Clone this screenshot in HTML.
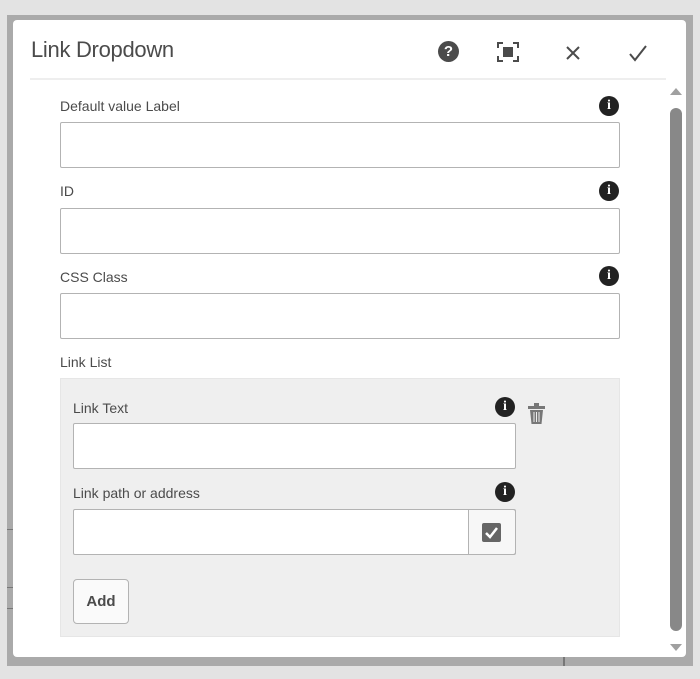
<!DOCTYPE html><html><head><style>
*{box-sizing:border-box;margin:0;padding:0}
body{width:700px;height:679px;background:#e3e3e3;position:relative;overflow:hidden;font-family:"Liberation Sans",sans-serif;color:#4b4b4b}
.frame{position:absolute;left:7px;top:15px;width:686px;height:651px;background:#aaa}
.dlg{position:absolute;left:13px;top:20px;width:673px;height:637px;background:#fff;border-radius:4px}
.a{position:absolute}
.lbl{position:absolute;font-size:14px;color:#4b4b4b}
.inp{position:absolute;background:#fff;border:1px solid #b3b3b3;border-radius:2px}
.info{position:absolute;width:20px;height:20px;border-radius:50%;background:#222;color:#fff;font:bold 14px/20px "Liberation Serif",serif;text-align:center}
</style></head><body>
<div class="frame"></div>
<div class="a" style="left:563px;top:657px;width:2px;height:9px;background:#777"></div>
<div class="a" style="left:7px;top:529px;width:6px;height:1px;background:#777"></div>
<div class="a" style="left:7px;top:587px;width:6px;height:1px;background:#777"></div>
<div class="a" style="left:7px;top:608px;width:6px;height:1px;background:#777"></div>
<div class="dlg"></div>
<div class="a" style="left:31px;top:37px;font-size:22px;font-weight:300;color:#4b4b4b;letter-spacing:-0.3px">Link Dropdown</div>
<div class="a" style="left:438px;top:41px;width:21px;height:21px;border-radius:50%;background:#4b4b4b;color:#fff;font:bold 15px/21px 'Liberation Sans';text-align:center">?</div>
<svg class="a" style="left:497px;top:42px" width="22" height="20" viewBox="0 0 22 20"><path d="M1 6V1h5M16 1h5v5M21 14v5h-5M6 19H1v-5" fill="none" stroke="#4b4b4b" stroke-width="2"/><rect x="6" y="5" width="10" height="10" fill="#4b4b4b"/></svg>
<svg class="a" style="left:565px;top:45px" width="16" height="16"><path d="M2 2l12 12M14 2L2 14" stroke="#4b4b4b" stroke-width="2"/></svg>
<svg class="a" style="left:628px;top:44px" width="20" height="18"><path d="M2 10l5 6L18 2" fill="none" stroke="#4b4b4b" stroke-width="2"/></svg>
<div class="a" style="left:30px;top:78px;width:636px;height:2px;background:#eee"></div>
<div class="a" style="left:670px;top:88px;width:0;height:0;border-left:6px solid transparent;border-right:6px solid transparent;border-bottom:7px solid #a0a0a0"></div>
<div class="a" style="left:670px;top:108px;width:12px;height:523px;background:#888;border-radius:6px"></div>
<div class="a" style="left:670px;top:644px;width:0;height:0;border-left:6px solid transparent;border-right:6px solid transparent;border-top:7px solid #a0a0a0"></div>

<div class="lbl" style="left:60px;top:98px">Default value Label</div><div class="info" style="left:599px;top:96px">i</div>
<div class="inp" style="left:60px;top:122px;width:560px;height:46px"></div>
<div class="lbl" style="left:60px;top:183px">ID</div><div class="info" style="left:599px;top:181px">i</div>
<div class="inp" style="left:60px;top:208px;width:560px;height:46px"></div>
<div class="lbl" style="left:60px;top:269px">CSS Class</div><div class="info" style="left:599px;top:266px">i</div>
<div class="inp" style="left:60px;top:293px;width:560px;height:46px"></div>
<div class="lbl" style="left:60px;top:354px">Link List</div>
<div class="a" style="left:60px;top:378px;width:560px;height:259px;background:#efefef;border:1px solid #e6e6e6"></div>
<div class="lbl" style="left:73px;top:400px">Link Text</div><div class="info" style="left:495px;top:397px">i</div>
<svg class="a" style="left:527px;top:403px" width="20" height="22" viewBox="0 0 20 22"><rect x="1" y="3" width="17" height="3" fill="#777"/><rect x="7" y="0" width="5" height="3" fill="#777"/><path d="M3 7h13l-1.5 14h-10z" fill="#777"/><path d="M7 9v10M9.5 9v10M12 9v10" stroke="#efefef" stroke-width="1"/></svg>
<div class="inp" style="left:73px;top:423px;width:443px;height:46px"></div>
<div class="lbl" style="left:73px;top:485px">Link path or address</div><div class="info" style="left:495px;top:482px">i</div>
<div class="inp" style="left:73px;top:509px;width:443px;height:46px"></div>
<div class="a" style="left:468px;top:509px;width:48px;height:46px;background:#f7f7f7;border:1px solid #b3b3b3;border-radius:0 3px 3px 0"></div>
<svg class="a" style="left:482px;top:523px" width="20" height="20"><rect x="0" y="0" width="19" height="19" rx="2" fill="#666"/><path d="M4 10l4 4 7-9" fill="none" stroke="#fff" stroke-width="2.5"/></svg>
<div class="a" style="left:73px;top:579px;width:56px;height:45px;background:#fafafa;border:1px solid #b3b3b3;border-radius:4px;font:bold 15px/43px 'Liberation Sans';text-align:center;color:#4b4b4b">Add</div>
</body></html>
